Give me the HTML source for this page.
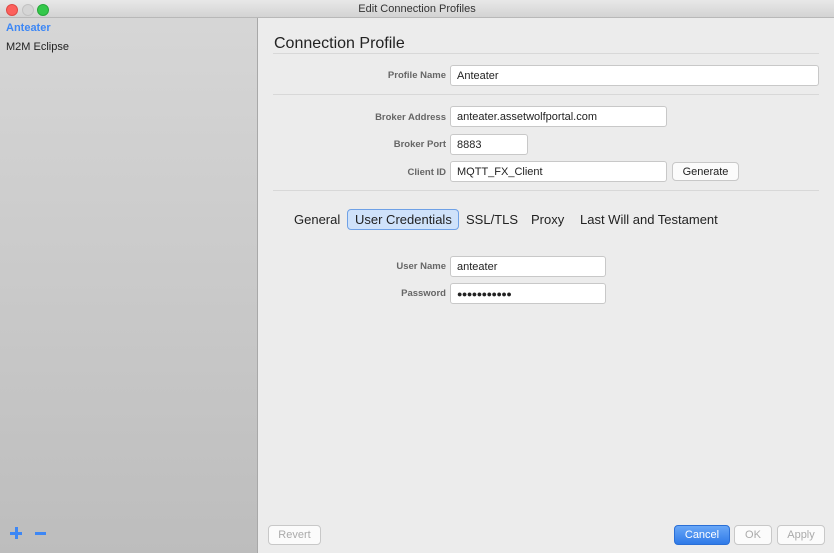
<!DOCTYPE html>
<html><head><meta charset="utf-8"><style>
*{box-sizing:border-box;margin:0;padding:0}
body{width:834px;height:553px;overflow:hidden;background:#ececec;font-family:"Liberation Sans",sans-serif;position:relative}
.a{position:absolute}
.title{left:0;top:0;width:834px;height:18px;background:linear-gradient(#e8e8e8,#d3d3d3);border-bottom:1px solid #b8b8b8;font-size:11px;color:#333;text-align:center;line-height:19px}
.dot{width:12px;height:12px;border-radius:50%;top:4px}
.side{left:0;top:18px;width:258px;height:535px;background:linear-gradient(#d6d6d6,#bdbdbd);border-right:1px solid #a8a8a8}
.lbl{font-size:9.5px;font-weight:bold;color:#666;text-align:right;width:150px}
.in{background:#fff;border:1px solid #c8c8c8;border-radius:3px;font-size:11px;color:#222;padding-left:6px;padding-top:1px;line-height:19px;height:21px}
.btn{background:#fbfbfb;border:1px solid #c8c8c8;border-radius:4px;font-size:11px;text-align:center;color:#222}
.hr{height:1px;background:#d8d8d8}
.tab{font-size:13px;color:#222;top:212px}
</style></head><body>
<div class="a title">Edit Connection Profiles</div>
<div class="a dot" style="left:6px;background:#fc605c;border:1px solid #de4a45"></div>
<div class="a dot" style="left:22px;background:#d5d5d5;border:1px solid #c2c2c2"></div>
<div class="a dot" style="left:37px;background:#34c84a;border:1px solid #27a83a"></div>
<div class="a side"></div>
<div class="a" style="left:6px;top:22px;font-size:11px;font-weight:bold;color:#3d87f5">Anteater</div>
<div class="a" style="left:6px;top:41px;font-size:11px;color:#222">M2M Eclipse</div>
<div class="a" style="left:10px;top:532px;width:12px;height:3px;background:#3d87f5"></div>
<div class="a" style="left:14.5px;top:527px;width:3px;height:12px;background:#3d87f5"></div>
<div class="a" style="left:35px;top:532px;width:11px;height:3px;background:#3d87f5"></div>

<div class="a" style="left:274px;top:35px;font-size:16px;color:#222">Connection Profile</div>
<div class="a hr" style="left:273px;top:53px;width:546px"></div>
<div class="a lbl" style="left:296px;top:70px">Profile Name</div>
<div class="a in" style="left:450px;top:65px;width:369px">Anteater</div>
<div class="a hr" style="left:273px;top:94px;width:546px"></div>
<div class="a lbl" style="left:296px;top:112px">Broker Address</div>
<div class="a in" style="left:450px;top:106px;width:217px">anteater.assetwolfportal.com</div>
<div class="a lbl" style="left:296px;top:139px">Broker Port</div>
<div class="a in" style="left:450px;top:134px;width:78px">8883</div>
<div class="a lbl" style="left:296px;top:167px">Client ID</div>
<div class="a in" style="left:450px;top:161px;width:217px">MQTT_FX_Client</div>
<div class="a btn" style="left:672px;top:162px;width:67px;height:19px;line-height:18px">Generate</div>
<div class="a hr" style="left:273px;top:190px;width:546px"></div>

<div class="a tab" style="left:294px">General</div>
<div class="a" style="left:347px;top:209px;width:112px;height:21px;background:#cfe2fa;border:1px solid #6fa1e6;border-radius:4px"></div>
<div class="a tab" style="left:355px">User Credentials</div>
<div class="a tab" style="left:466px">SSL/TLS</div>
<div class="a tab" style="left:531px">Proxy</div>
<div class="a tab" style="left:580px">Last Will and Testament</div>

<div class="a lbl" style="left:296px;top:261px">User Name</div>
<div class="a in" style="left:450px;top:256px;width:156px">anteater</div>
<div class="a lbl" style="left:296px;top:288px">Password</div>
<div class="a in" style="left:450px;top:283px;width:156px;font-size:9px;letter-spacing:-0.5px">●●●●●●●●●●●</div>

<div class="a btn" style="left:268px;top:525px;width:53px;height:20px;line-height:18px;color:#aaa">Revert</div>
<div class="a btn" style="left:674px;top:525px;width:56px;height:20px;line-height:18px;color:#fff;background:linear-gradient(#69a7f7,#2f7ae8);border-color:#2a6fd6">Cancel</div>
<div class="a btn" style="left:734px;top:525px;width:38px;height:20px;line-height:18px;color:#aaa">OK</div>
<div class="a btn" style="left:777px;top:525px;width:48px;height:20px;line-height:18px;color:#aaa">Apply</div>
</body></html>
